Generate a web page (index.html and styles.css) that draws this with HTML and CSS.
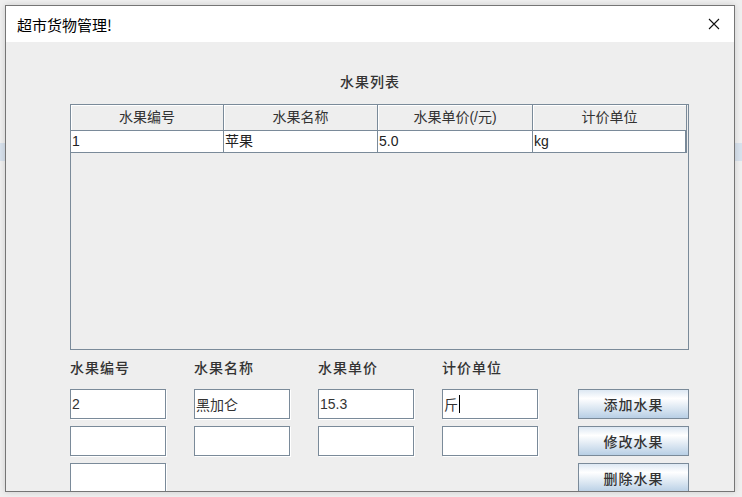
FILE: index.html
```html
<!DOCTYPE html>
<html>
<head>
    <meta charset="utf-8">
    <title>超市货物管理!</title>
    <link rel="stylesheet" href="styles.css">
</head>
<body>
    <div class="window">
        <div class="titlebar">
            <span class="title">超市货物管理!</span>
            <svg class="close" width="12" height="12" viewBox="0 0 12 12">
                <path d="M1 1 L11 11 M11 1 L1 11" stroke="#111" stroke-width="1.1" fill="none"/>
            </svg>
        </div>
        <div class="content">
            <h2 class="list-heading">水果列表</h2>
            <div class="table-pane">
                <div class="table-row table-head">
                    <div class="cell">水果编号</div>
                    <div class="cell">水果名称</div>
                    <div class="cell">水果单价(/元)</div>
                    <div class="cell">计价单位</div>
                </div>
                <div class="table-row table-data">
                    <div class="cell">1</div>
                    <div class="cell">苹果</div>
                    <div class="cell">5.0</div>
                    <div class="cell">kg</div>
                </div>
            </div>
            <div class="form">
                <div class="form-col">
                    <label class="form-label">水果编号</label>
                    <div class="field">2</div>
                    <div class="field"></div>
                    <div class="field"></div>
                </div>
                <div class="form-col">
                    <label class="form-label">水果名称</label>
                    <div class="field">黑加仑</div>
                    <div class="field"></div>
                </div>
                <div class="form-col">
                    <label class="form-label">水果单价</label>
                    <div class="field">15.3</div>
                    <div class="field"></div>
                </div>
                <div class="form-col wide">
                    <label class="form-label">计价单位</label>
                    <div class="field">斤<span class="caret"></span></div>
                    <div class="field"></div>
                </div>
                <div class="form-col buttons">
                    <span class="form-label"></span>
                    <button class="btn" type="button">添加水果</button>
                    <button class="btn" type="button">修改水果</button>
                    <button class="btn" type="button">删除水果</button>
                </div>
            </div>
        </div>
    </div>
</body>
</html>
```

FILE: styles.css
```css
html, body {
  margin: 0;
  height: 100%;
}
body {
  background: linear-gradient(to bottom, #efefef 0, #efefef 143px, #d7e1ec 143px, #d7e1ec 161px, #efefef 161px);
  font-family: "Liberation Sans", "Noto Sans CJK SC", sans-serif;
  overflow: hidden;
}
.window {
  box-sizing: border-box;
  margin: 5px 0 0 5px;
  width: 730px;
  height: 487px;
  border: 1px solid #757575;
  display: flex;
  flex-direction: column;
  box-shadow: 0 0 6px rgba(0,0,0,.15);
}
.titlebar {
  height: 36px;
  flex: none;
  background: #fff;
  display: flex;
  align-items: center;
  justify-content: space-between;
  padding: 0 14px 0 11px;
}
.title {
  font-size: 15px;
  color: #000;
  font-family: "Noto Sans CJK SC", sans-serif;
}
.close {
  display: block;
}
.content {
  flex: 1;
  background: #eeeeee;
  overflow: hidden;
  color: #333;
}
.list-heading {
  margin: 0;
  padding-top: 30px;
  text-align: center;
  font-size: 14px;
  line-height: 20px;
  font-weight: 500;
  letter-spacing: 1px;
  color: #333;
}
.table-pane {
  box-sizing: border-box;
  margin: 12px 0 0 64px;
  width: 619px;
  height: 246px;
  border: 1px solid #7a8a99;
}
.table-row {
  display: grid;
  grid-template-columns: 153px 154px 155px 154px;
}
.table-head .cell {
  box-sizing: border-box;
  height: 26px;
  line-height: 24px;
  text-align: center;
  font-size: 14px;
  background: #eeeeee;
  border-right: 1px solid #7a8a99;
  border-bottom: 1px solid #7a8a99;
  box-shadow: inset 1px 1px 0 #fff;
  color: #333;
}
.table-data .cell {
  box-sizing: border-box;
  height: 22px;
  line-height: 20px;
  padding-left: 1px;
  font-size: 14px;
  background: #fff;
  border-right: 1px solid #7a8a99;
  border-bottom: 1px solid #7a8a99;
  color: #222;
}
.table-data .cell:last-child {
  border-right: 2px solid #7a8a99;
}
.form {
  display: flex;
  margin: 7px 0 0 64px;
}
.form-col {
  width: 124px;
  display: flex;
  flex-direction: column;
  gap: 7px;
}
.form-col.wide {
  width: 136px;
}
.form-col.buttons {
  width: 111px;
}
.form-label {
  display: block;
  height: 25px;
  line-height: 20px;
  font-size: 14px;
  font-weight: 500;
  letter-spacing: 1px;
  color: #333;
  font-family: "Noto Sans CJK SC", sans-serif;
}
.field {
  box-sizing: border-box;
  width: 96px;
  height: 30px;
  flex: none;
  border: 1px solid #7a8a99;
  background: #fff;
  box-shadow: 1px 1px 0 #fff, inset 1px 1px 0 #fff;
  padding-left: 1px;
  font-size: 14px;
  color: #333;
  display: flex;
  align-items: center;
}
.caret {
  display: inline-block;
  width: 1px;
  height: 18px;
  background: #000;
  margin-left: 1px;
}
.btn {
  box-sizing: border-box;
  width: 111px;
  height: 30px;
  flex: none;
  border: 1px solid #7a8a99;
  background: linear-gradient(to bottom, #dde8f3 0%, #ffffff 30%, #b8cfe5 100%);
  font-family: "Noto Sans CJK SC", sans-serif;
  font-size: 14px;
  font-weight: 500;
  letter-spacing: 1px;
  color: #333;
  padding: 0;
}
```
